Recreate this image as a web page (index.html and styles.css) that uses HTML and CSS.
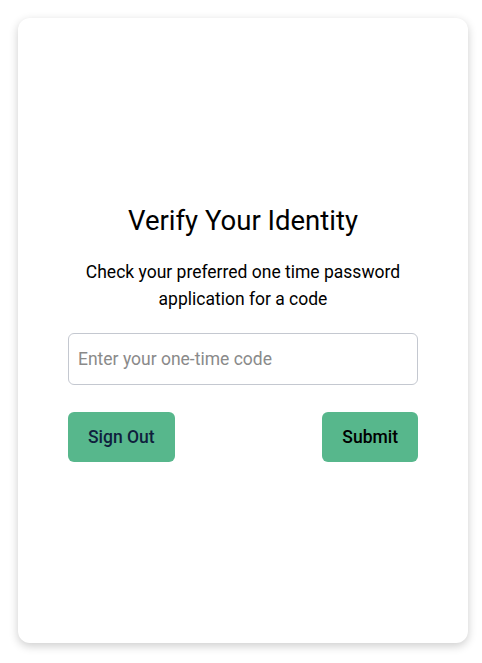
FILE: index.html
```html
<!DOCTYPE html>
<html>
<head>
<meta charset="utf-8">
<link rel="stylesheet" href="styles.css">
</head>
<body>
<div class="page">
  <div class="card">
    <h1 class="title">Verify Your Identity</h1>
    <p class="desc">Check your preferred one time password application for a code</p>
    <input class="code" type="text" placeholder="Enter your one-time code">
    <div class="actions">
      <button class="btn btn-out">Sign Out</button>
      <button class="btn btn-submit">Submit</button>
    </div>
  </div>
</div>
</body>
</html>
```
FILE: styles.css
```css
html, body {
  margin: 0;
  padding: 0;
  background: #ffffff;
  font-family: Roboto, "Liberation Sans", sans-serif;
}
.page {
  padding: 18px;
  box-sizing: border-box;
  height: 663px;
  display: flex;
  flex-direction: column;
}
.card {
  width: 450px;
  height: 625px;
  box-sizing: border-box;
  padding: 6px 50px 0;
  background: #ffffff;
  border-radius: 12px;
  box-shadow: 0 3px 10px rgba(0,0,0,0.2);
  display: flex;
  flex-direction: column;
  justify-content: center;
  align-items: stretch;
}
.title {
  margin: 0;
  text-align: center;
  font-size: 27.5px;
  font-weight: 400;
  line-height: 32px;
  color: #000;
}
.desc {
  margin: 22px 0 0;
  text-align: center;
  font-size: 17.5px;
  line-height: 27px;
  color: #000;
  padding: 0 5px;
}
.code {
  margin-top: 20px;
  height: 52px;
  box-sizing: border-box;
  border: 1px solid #c4c8d0;
  border-radius: 6px;
  padding: 0 9px;
  font-family: Roboto, "Liberation Sans", sans-serif;
  font-size: 17.5px;
  color: #000;
  outline: none;
}
.code::placeholder {
  color: #8a8a8a;
}
.actions {
  margin-top: 27px;
  display: flex;
  justify-content: space-between;
}
.btn {
  height: 50px;
  padding: 0 20px;
  border: none;
  border-radius: 6px;
  background: #57b78c;
  font-family: Roboto, "Liberation Sans", sans-serif;
  font-size: 17.5px;
  font-weight: 500;
  cursor: pointer;
}
.btn-out { color: #0f1f3d; }
.btn-submit { color: #000; }
```
